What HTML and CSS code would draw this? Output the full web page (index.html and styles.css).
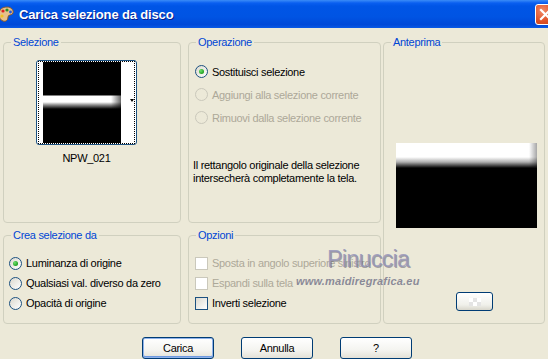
FILE: index.html
```html
<!DOCTYPE html>
<html lang="it">
  <head>
    <meta charset="UTF-8">
    <title>Carica selezione da disco</title>
    <link rel="stylesheet" href="styles.css">
  </head>
  <body>
    <div class="window">
      <div class="titlebar">
        <svg class="app-icon" width="18" height="18" viewBox="0 0 18 18">
          <path d="M2 9 C2 4 6 2 10 2 C14 2 17 5 16 8 C15 11 11 9 11 12 C11 15 9 17 6 16 C3 15 2 12 2 9 Z" fill="#e7c08a" stroke="#8a5a2b" stroke-width="1"/>
          <circle cx="6" cy="6" r="1.6" fill="#d22"/>
          <circle cx="10" cy="5" r="1.6" fill="#2a8d2a"/>
          <circle cx="13.5" cy="7" r="1.4" fill="#2656d8"/>
          <circle cx="5" cy="11" r="1.6" fill="#f0c020"/>
        </svg>
        <span class="title">Carica selezione da disco</span>
        <div class="close">
          <svg width="13" height="13" viewBox="0 0 13 13">
            <path d="M2 2 L11 11 M11 2 L2 11" stroke="#fff" stroke-width="2.2" stroke-linecap="square"/>
          </svg>
        </div>
      </div>

      <div class="content">
        <div class="groups">
          <div class="left-grid">
            <fieldset class="group sel">
              <legend>Selezione</legend>
              <div class="thumb">
                <div class="thumb-in">
                  <div class="thumb-img"></div>
                  <div class="thumb-arrow"></div>
                </div>
              </div>
              <div class="thumb-name">NPW_021</div>
            </fieldset>

            <fieldset class="group op">
              <legend>Operazione</legend>
              <div class="opt-list">
                <div class="row"><span class="radio checked"></span>Sostituisci selezione</div>
                <div class="row disabled"><span class="radio"></span>Aggiungi alla selezione corrente</div>
                <div class="row disabled"><span class="radio"></span>Rimuovi dalla selezione corrente</div>
              </div>
              <p class="note">Il rettangolo originale della selezione intersecherà completamente la tela.</p>
            </fieldset>

            <fieldset class="group crea">
              <legend>Crea selezione da</legend>
              <div class="opt-list tight">
                <div class="row"><span class="radio checked"></span>Luminanza di origine</div>
                <div class="row"><span class="radio"></span>Qualsiasi val. diverso da zero</div>
                <div class="row"><span class="radio"></span>Opacità di origine</div>
              </div>
            </fieldset>

            <fieldset class="group opts">
              <legend>Opzioni</legend>
              <div class="opt-list tight">
                <div class="row disabled"><span class="check"></span>Sposta in angolo superiore sinistro</div>
                <div class="row disabled"><span class="check"></span>Espandi sulla tela</div>
                <div class="row"><span class="check"></span>Inverti selezione</div>
              </div>
            </fieldset>
          </div>

          <fieldset class="group preview">
            <legend>Anteprima</legend>
            <div class="preview-img"></div>
            <div class="preview-btn"><span class="checker"></span></div>
          </fieldset>
        </div>

        <div class="buttons">
          <button class="btn default">Carica</button>
          <button class="btn">Annulla</button>
          <button class="btn">?</button>
        </div>
      </div>

      <div class="watermark">
        <div class="wm-name">Pinuccia</div>
        <div class="wm-url">www.maidiregrafica.eu</div>
      </div>
    </div>
  </body>
</html>
```
FILE: styles.css
```css
body {
  margin: 0;
  background: #ECE9D8;
  font-family: "Liberation Sans", Arial, sans-serif;
  font-size: 11px;
  letter-spacing: -0.3px;
  color: #000;
}

.window {
  position: relative;
  width: 548px;
  height: 359px;
  overflow: hidden;
  background: #ECE9D8;
}

/* title bar */
.titlebar {
  height: 28px;
  display: flex;
  align-items: center;
  overflow: hidden;
  background: linear-gradient(#3b8cf7 0, #0a5ff0 3px, #0055e6 6px, #0054e3 60%, #0049d8 88%, #0a5ae6 100%);
}

.app-icon {
  margin-left: -3px;
  flex: none;
}

.title {
  margin-left: 4px;
  color: #fff;
  font-weight: bold;
  font-size: 13px;
  letter-spacing: -0.15px;
  text-shadow: 1px 1px 0 #0a1f8c;
}

.close {
  margin-left: auto;
  margin-right: -8px;
  width: 19px;
  height: 19px;
  border: 1px solid #fff;
  border-radius: 3px;
  background: radial-gradient(circle at 35% 30%, #f08a68 0, #e0542a 55%, #c23c14 100%);
  display: flex;
  align-items: center;
  justify-content: center;
  margin-top: 1px;
}

/* body */
.content {
  padding: 8px 0 0 3px;
}

.groups {
  display: flex;
  gap: 2px;
  height: 288px;
}

.left-grid {
  display: grid;
  grid-template-columns: 178px 193px;
  grid-template-rows: 187px 95px;
  column-gap: 7px;
  row-gap: 6px;
}

.group {
  margin: 0;
  padding: 0;
  min-width: 0;
  border: 1px solid #D0D0BF;
  border-radius: 4px;
  box-sizing: border-box;
}

.group legend {
  color: #0046D5;
  padding: 0 2px;
  margin-left: 7px;
  line-height: 13px;
}

/* Selezione */
.thumb {
  margin: 11px 0 0 32px;
  width: 101px;
  height: 85px;
  box-sizing: border-box;
  border: 1px solid #1C5180;
  border-radius: 3px;
  padding: 0 1px;
  background: #fff;
}

.thumb-in {
  height: 100%;
  box-sizing: border-box;
  border: 1px dotted #000;
  display: flex;
  padding-left: 4px;
}

.thumb-img {
  width: 87px;
  background:
    linear-gradient(to right, transparent 78px, #fff 78px),
    linear-gradient(to right, transparent 68px, rgba(0, 0, 0, 0.6) 78px),
    linear-gradient(#000 33px, #fff 34px, #fff 40px, #8a8a8a 43px, #000 47px);
}

.thumb-arrow {
  flex: 1;
  position: relative;
}

.thumb-arrow::after {
  content: "";
  position: absolute;
  left: 0;
  top: 37px;
  border-left: 2.5px solid transparent;
  border-right: 2.5px solid transparent;
  border-top: 3px solid #000;
}

.thumb-name {
  width: 101px;
  margin: 7px 0 0 32px;
  text-align: center;
  line-height: 13px;
}

/* radio / check lists */
.opt-list {
  display: flex;
  flex-direction: column;
  gap: 2px;
  padding: 12px 0 0 6px;
}

.opt-list.tight {
  gap: 0;
  padding-top: 11px;
}

.crea .opt-list {
  padding-left: 5px;
}

.row {
  height: 21px;
  display: flex;
  align-items: center;
  gap: 4px;
  white-space: nowrap;
}

.tight .row {
  height: 20px;
}

.row.disabled {
  color: #ACA899;
}

.radio {
  width: 13px;
  height: 13px;
  box-sizing: border-box;
  border: 1px solid #1C5180;
  border-radius: 50%;
  background: linear-gradient(135deg, #dcd9ce, #fff);
  position: relative;
  flex: none;
}

.radio.checked::after {
  content: "";
  position: absolute;
  left: 3px;
  top: 3px;
  width: 5px;
  height: 5px;
  border-radius: 50%;
  background: radial-gradient(circle at 35% 35%, #6ee06e, #21a121 70%);
}

.disabled .radio {
  border-color: #CAC8BB;
  background: #ECE9D8;
}

.check {
  width: 13px;
  height: 13px;
  box-sizing: border-box;
  border: 1px solid #1C5180;
  background: linear-gradient(135deg, #dcdad0, #fff);
  flex: none;
}

.disabled .check {
  border-color: #CAC8BB;
  background: #fff;
}

.note {
  margin: 31px 0 0 4px;
  line-height: 13px;
  width: 185px;
}

/* preview */
.preview {
  width: 162px;
}

.preview-img {
  width: 141px;
  height: 85px;
  margin: 94px 0 0 12px;
  background:
    linear-gradient(to right, transparent 133px, rgba(0, 0, 0, 0.35) 141px) 0 0 / 100% 24px no-repeat,
    linear-gradient(#fff 14px, #b0b0b0 19px, #000 25px);
}

.preview-btn {
  width: 37px;
  height: 19px;
  box-sizing: border-box;
  margin: 64px 0 0 72px;
  border: 1px solid #003C74;
  border-radius: 3px;
  background: linear-gradient(#fff, #f0f0ea 70%, #d8d6cb);
  display: flex;
  align-items: center;
  justify-content: center;
}

.checker {
  width: 12px;
  height: 8px;
  background: conic-gradient(#e4e4e4 25%, #fff 0 50%, #e4e4e4 0 75%, #fff 0) 0 0 / 8px 8px;
}

/* buttons */
.buttons {
  display: flex;
  gap: 27px;
  margin: 13px 0 0 139px;
}

.btn {
  width: 72px;
  height: 22px;
  padding: 0;
  border: 1px solid #003C74;
  border-radius: 3px;
  background: linear-gradient(#fff, #f4f4f0 60%, #e3e1d7);
  font-family: "Liberation Sans", Arial, sans-serif;
  font-size: 11px;
  letter-spacing: -0.3px;
  color: #000;
}

.btn.default {
  box-shadow: inset 0 0 0 1px #8fb2ea, inset 0 -1px 0 1px #6d99e0;
}

/* watermark */
.watermark {
  position: absolute;
  left: 296px;
  top: 247px;
  pointer-events: none;
}

.wm-name {
  margin-left: 31px;
  font-size: 23px;
  letter-spacing: -0.6px;
  line-height: 24px;
  color: rgba(150, 150, 185, 0.85);
  text-shadow: 1px 1px 0 rgba(70, 70, 90, 0.45);
}

.wm-url {
  font-size: 11px;
  font-weight: bold;
  font-style: italic;
  letter-spacing: 0.2px;
  color: rgba(120, 120, 140, 0.85);
  line-height: 12px;
  margin-top: 4px;
}
```
